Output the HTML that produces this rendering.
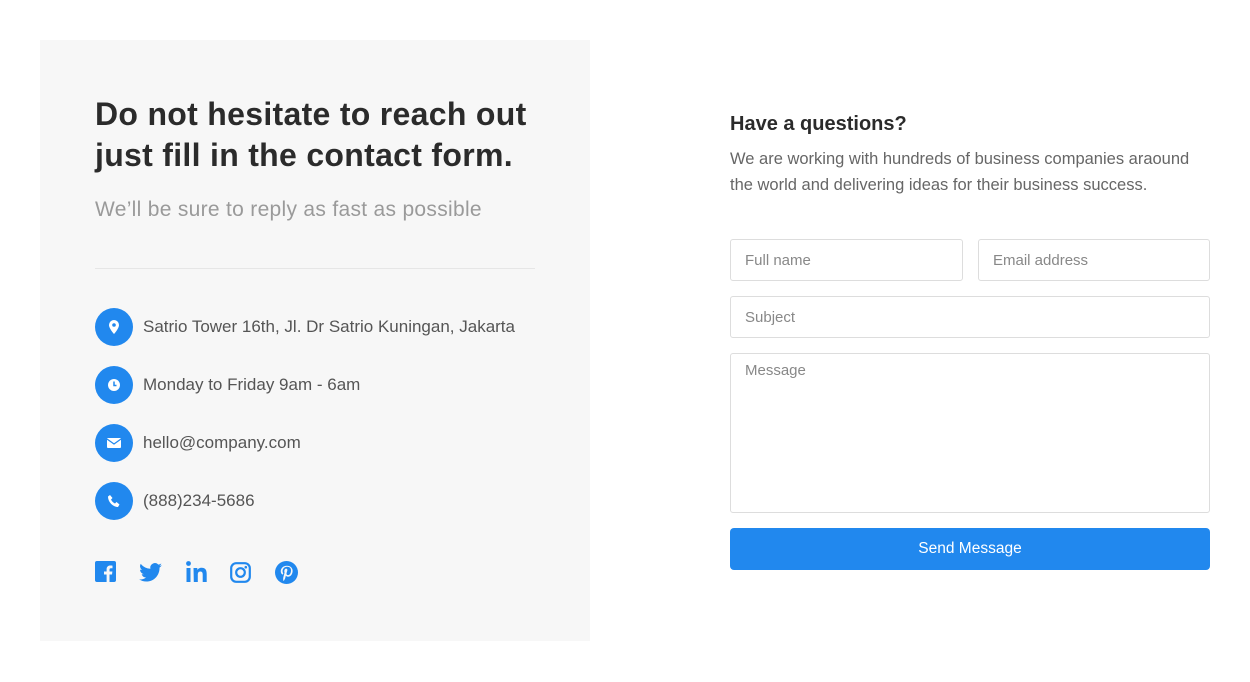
<!DOCTYPE html>
<html><head><style>
body{margin:0;width:1250px;height:682px;background:#fff;font-family:"Liberation Sans",sans-serif;position:relative;overflow:hidden}
.panel{position:absolute;left:40px;top:40px;width:550px;height:601px;background:#f7f7f7}
h1{position:absolute;left:95px;top:94px;margin:0;font-size:32px;line-height:41px;color:#2b2b2b;font-weight:bold;letter-spacing:0.3px}
.sub{position:absolute;left:95px;top:198px;font-size:21px;color:#9a9a9a;letter-spacing:0.3px}
.hr{position:absolute;left:95px;top:268px;width:440px;height:1px;background:#e6e6e6}
.it{position:absolute;left:95px;height:38px;display:flex;align-items:center;font-size:17px;color:#555}
.ic{width:38px;height:38px;border-radius:50%;background:#2188ee;margin-right:10px;display:flex;align-items:center;justify-content:center}
.soc{position:absolute;top:561px;display:flex}
h2{position:absolute;left:730px;top:113px;margin:0;font-size:20px;color:#2b2b2b}
.p{position:absolute;left:730px;top:146px;width:482px;font-size:16.5px;line-height:26px;color:#666}
.in{position:absolute;border:1px solid #ddd;border-radius:3px;box-sizing:border-box;font-size:15px;color:#888;padding:12px 14px;background:#fff}
.btn{position:absolute;left:730px;top:528px;width:480px;height:42px;background:#2188ee;border-radius:4px;color:#fff;font-size:15.5px;text-align:center;line-height:42px}
</style></head><body>
<div class="panel"></div>
<h1>Do not hesitate to reach out<br>just fill in the contact form.</h1>
<div class="sub">We’ll be sure to reply as fast as possible</div>
<div class="hr"></div>
<div class="it" style="top:308px"><div class="ic"><svg width="14" height="16" viewBox="0 0 14 16"><path d="M7 1a5 5 0 0 0-5 5c0 3.5 5 9 5 9s5-5.5 5-9a5 5 0 0 0-5-5z" fill="#fff"/><circle cx="7" cy="6" r="1.8" fill="#2188ee"/></svg></div>Satrio Tower 16th, Jl. Dr Satrio Kuningan, Jakarta</div>
<div class="it" style="top:366px"><div class="ic"><svg width="14" height="14" viewBox="0 0 14 14"><circle cx="7" cy="7" r="6" fill="#fff"/><path d="M7 3.5V7.5H9.5" stroke="#2188ee" stroke-width="1.5" fill="none"/></svg></div>Monday to Friday 9am - 6am</div>
<div class="it" style="top:424px"><div class="ic"><svg width="16" height="12" viewBox="0 0 16 12"><rect x="1" y="1" width="14" height="10" rx="1" fill="#fff"/><path d="M1 2l7 5 7-5" stroke="#2188ee" stroke-width="1.2" fill="none"/></svg></div>hello@company.com</div>
<div class="it" style="top:482px"><div class="ic"><svg width="14" height="14" viewBox="0 0 14 14"><path d="M3 1l2.5 3-1.5 1.5c.8 1.8 2.2 3.2 4 4L9.5 8l3 2.5-1.5 2.5C6 13 1 8 1 2.5z" fill="#fff"/></svg></div>(888)234-5686</div>
<div class="soc" style="left:95px"><svg width="21" height="21" viewBox="0 0 21 21"><rect width="21" height="21" rx="2" fill="#2188ee"/><path d="M14.5 21v-7.5h2.5l.4-3h-2.9V8.7c0-.9.3-1.4 1.5-1.4h1.5V4.6c-.3 0-1.2-.1-2.2-.1-2.2 0-3.7 1.3-3.7 3.8v2.2H9v3h2.6V21z" fill="#f7f7f7"/></svg></div>
<div class="soc" style="left:139px;top:563px"><svg width="23" height="19" viewBox="0 0 24 20"><path d="M24 2.4c-.9.4-1.8.6-2.8.8 1-.6 1.8-1.6 2.2-2.7-1 .6-2 1-3.1 1.2A4.900 4.900 0 0 0 11.9 6 14 14 0 0 1 1.7.9a4.9 4.9 0 0 0 1.5 6.6c-.8 0-1.6-.3-2.2-.6 0 2.4 1.700 4.4 3.9 4.8-.7.2-1.5.2-2.2.1.6 2 2.4 3.4 4.6 3.4A9.9 9.9 0 0 1 0 17.3 14 14 0 0 0 7.5 19.5c9.1 0 14-7.5 14-14v-.6c1-.7 1.8-1.6 2.5-2.5z" fill="#2188ee"/></svg></div>
<div class="soc" style="left:186px;top:561px"><svg width="21" height="21" viewBox="0 0 21 21"><rect x="0.5" y="7" width="4" height="14" fill="#2188ee"/><circle cx="2.5" cy="2.5" r="2.4" fill="#2188ee"/><path d="M7.5 7h3.8v2c.6-1.1 2-2.3 4.2-2.3 4.4 0 5.2 2.9 5.2 6.6V21h-4v-6.8c0-1.6 0-3.7-2.3-3.7s-2.6 1.8-2.6 3.6V21h-4z" fill="#2188ee"/></svg></div>
<div class="soc" style="left:230px;top:562px"><svg width="21" height="21" viewBox="0 0 21 21"><rect x="1.2" y="1.2" width="18.6" height="18.6" rx="5" fill="none" stroke="#2188ee" stroke-width="2.2"/><circle cx="10.5" cy="10.5" r="4.3" fill="none" stroke="#2188ee" stroke-width="2.2"/><circle cx="15.8" cy="5.2" r="1.3" fill="#2188ee"/></svg></div>
<div class="soc" style="left:275px;top:561px"><svg width="23" height="23" viewBox="0 0 24 24"><circle cx="12" cy="12" r="12" fill="#2188ee"/><path d="M12.5 5c-4.3 0-6.5 3-6.5 5.6 0 1.6.6 3 1.9 3.5.2.1.4 0 .5-.2l.2-.8c.1-.2 0-.3-.1-.5-.4-.5-.6-1.1-.6-1.9 0-2.5 1.8-4.7 4.8-4.7 2.6 0 4 1.6 4 3.7 0 2.8-1.2 5.1-3.1 5.1-1 0-1.8-.9-1.600-1.900.3-1.300.9-2.600.9-3.500 0-.8-.4-1.500-1.300-1.500-1.100 0-1.900 1.100-1.900 2.600 0 .9.3 1.600.3 1.600L8.7 17c-.4 1.600 0 3.500 0 3.700l.3.1c.1-.1 1.300-1.600 1.700-3.100l.6-2.400c.3.6 1.200 1.100 2.200 1.100 2.900 0 4.900-2.700 4.900-6.200C18.4 7.500 16.100 5 12.500 5z" fill="#f7f7f7"/></svg></div>
<h2>Have a questions?</h2>
<div class="p">We are working with hundreds of business companies araound the world and delivering ideas for their business success.</div>
<div class="in" style="left:730px;top:239px;width:233px;height:42px">Full name</div>
<div class="in" style="left:978px;top:239px;width:232px;height:42px">Email address</div>
<div class="in" style="left:730px;top:296px;width:480px;height:42px">Subject</div>
<div class="in" style="left:730px;top:353px;width:480px;height:160px;padding-top:8px">Message</div>
<div class="btn">Send Message</div>
</body></html>
